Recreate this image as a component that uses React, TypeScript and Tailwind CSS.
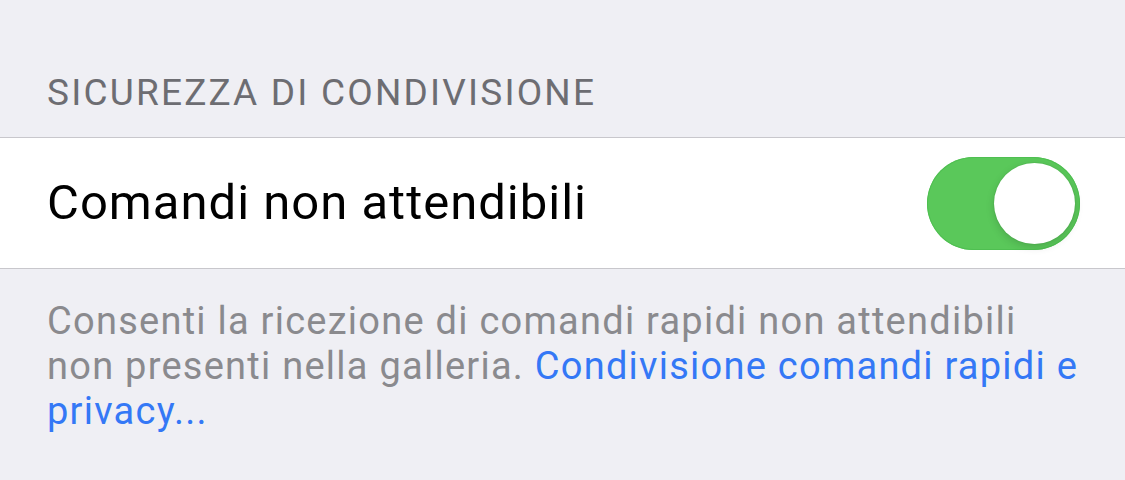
export default function App() {
  return (
    <div
      className="w-[1125px] h-[480px] bg-[#efeff4] overflow-hidden"
      style={{ fontFamily: 'Roboto, "Noto Sans", sans-serif' }}
    >
      {/* Section header */}
      <div className="h-[137px] px-[47px] flex items-end pb-[26px]">
        <h2 className="text-[37px] leading-none tracking-[2.2px] text-[#6d6d72] uppercase">
          Sicurezza di condivisione
        </h2>
      </div>

      {/* Toggle row */}
      <div className="h-[132px] bg-white border-y border-[#c8c7cc] flex items-center justify-between pl-[47px] pr-[45px]">
        <span className="text-[49px] text-black tracking-[1px]">Comandi non attendibili</span>
        <button
          type="button"
          className="relative w-[153px] h-[93px] rounded-full bg-[#5ac85a] shadow-[inset_0_0_0_1px_#4fbf51]"
        >
          <span className="absolute right-[5px] top-[6px] w-[81px] h-[81px] rounded-full bg-white shadow-[0_3px_8px_rgba(0,0,0,0.15),0_0_0_1px_rgba(0,0,0,0.04)]" />
        </button>
      </div>

      {/* Footer */}
      <p className="px-[47px] pt-[30px] text-[38px] leading-[45px] text-[#8a8a8e] tracking-[1.25px] whitespace-nowrap">
        Consenti la ricezione di comandi rapidi non attendibili
        <br />
        non presenti nella galleria.{' '}
        <span className="text-[#3478f6]">Condivisione comandi rapidi e</span>
        <br />
        <span className="text-[#3478f6]">privacy...</span>
      </p>
    </div>
  );
}
